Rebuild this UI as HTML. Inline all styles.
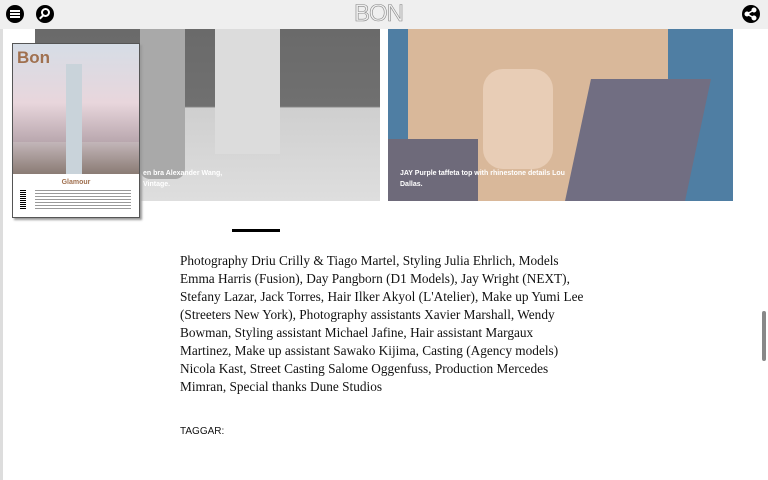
<!DOCTYPE html>
<html><head><meta charset="utf-8"><style>
*{margin:0;padding:0;box-sizing:border-box}
body{width:768px;height:480px;overflow:hidden;background:#fff;position:relative;font-family:"Liberation Sans",sans-serif}
.hdr{position:absolute;left:0;top:0;width:768px;height:29px;background:#efefef}
.ic{position:absolute;top:5px;width:18px;height:18px;border-radius:50%;background:#000}
.leftbar{position:absolute;left:0;top:29px;width:3px;height:451px;background:#ddd}
.img1{position:absolute;left:35px;top:29px;width:345px;height:172px;background:linear-gradient(#6a6a6a 0,#707070 45%,#cfcfcf 46%,#dedede 100%);overflow:hidden}
.img2{position:absolute;left:388px;top:29px;width:345px;height:172px;background:#4f7ea3;overflow:hidden}
.cap{position:absolute;color:#fff;font-size:7px;font-weight:bold;line-height:11px}
.cover{position:absolute;left:12px;top:43px;width:128px;height:175px;border:1px solid #555;background:#fff;box-shadow:2px 2px 2px #999;overflow:hidden}
.txt{position:absolute;left:180px;top:252px;width:406px;font-family:"Liberation Serif",serif;font-size:13.3px;line-height:18px;color:#111}
.sb{position:absolute;left:762px;top:311px;width:4px;height:50px;background:#888;border-radius:2px}
</style></head><body>
<div class="hdr">
<div class="ic" style="left:6px"><div style="position:absolute;left:4px;top:5px;width:10px;height:2px;background:#fff;box-shadow:0 3px 0 #fff,0 6px 0 #fff"></div></div>
<div class="ic" style="left:36px"><div style="position:absolute;left:5px;top:3px;width:9px;height:9px;border:2px solid #fff;border-radius:50%"></div><div style="position:absolute;left:3px;top:11px;width:5px;height:2px;background:#fff;transform:rotate(-45deg)"></div></div>
<div style="position:absolute;left:354px;top:2px;font-size:24px;line-height:24px;color:#efefef;-webkit-text-stroke:0.6px #888;letter-spacing:-1px">BON</div>
<div class="ic" style="left:742px"><svg width="18" height="18" viewBox="0 0 18 18"><g fill="#fff" stroke="#fff"><circle cx="12" cy="5" r="2"/><circle cx="5" cy="9" r="2"/><circle cx="12" cy="13" r="2"/><path d="M12 5L5 9L12 13" fill="none" stroke-width="1.5"/></g></svg></div>
</div>
<div class="leftbar"></div>
<div class="img1">
<div style="position:absolute;left:105px;top:0;width:45px;height:150px;background:#a9a9a9;border-radius:0 0 10px 10px"></div>
<div style="position:absolute;left:180px;top:0;width:65px;height:125px;background:#dcdcdc"></div>
<div class="cap" style="left:108px;top:139px">en bra Alexander Wang,<br>Vintage.</div>
</div>
<div class="img2">
<div style="position:absolute;left:20px;top:0;width:260px;height:172px;background:#d9b89a;border-radius:0 0 30px 30px"></div>
<div style="position:absolute;left:0;top:110px;width:90px;height:62px;background:#6e6a7a"></div>
<div style="position:absolute;left:190px;top:50px;width:120px;height:122px;background:#716e82;transform:skewX(-12deg)"></div>
<div style="position:absolute;left:95px;top:40px;width:70px;height:100px;background:#e8cdb6;border-radius:20px"></div>
<div class="cap" style="left:12px;top:139px">JAY Purple taffeta top with rhinestone details Lou<br>Dallas.</div>
</div>
<div class="cover">
<div style="position:absolute;left:0;top:0;width:126px;height:98px;background:linear-gradient(#d6dde6,#e8d6dc 60%,#b9a7ae 100%)"></div>
<div style="position:absolute;left:0;top:98px;width:126px;height:32px;background:linear-gradient(#c3b6b9,#8a7b74)"></div>
<div style="position:absolute;left:53px;top:20px;width:16px;height:110px;background:#c9d3da"></div>
<div style="position:absolute;left:4px;top:4px;font-size:17px;font-weight:bold;color:#a0704f">Bon</div>
<div style="position:absolute;left:0;top:135px;width:126px;text-align:center;font-size:7px;color:#a0704f;font-weight:bold">Glamour</div>
<div style="position:absolute;left:7px;top:146px;width:6px;height:20px;background:repeating-linear-gradient(#000 0 1px,#fff 1px 2px)"></div>
<div style="position:absolute;left:22px;top:146px;width:96px;height:20px;background:repeating-linear-gradient(#999 0 1px,#fff 1px 3px)"></div>
</div>
<div style="position:absolute;left:232px;top:229px;width:48px;height:3px;background:#000"></div>
<div class="txt">Photography Driu Crilly &amp; Tiago Martel, Styling Julia Ehrlich, Models Emma Harris (Fusion), Day Pangborn (D1 Models), Jay Wright (NEXT), Stefany Lazar, Jack Torres, Hair Ilker Akyol (L'Atelier), Make up Yumi Lee (Streeters New York), Photography assistants Xavier Marshall, Wendy Bowman, Styling assistant Michael Jafine, Hair assistant Margaux Martinez, Make up assistant Sawako Kijima, Casting (Agency models) Nicola Kast, Street Casting Salome Oggenfuss, Production Mercedes Mimran, Special thanks Dune Studios</div>
<div style="position:absolute;left:180px;top:426px;font-size:10px;color:#111">TAGGAR:</div>
<div class="sb"></div>
</body></html>
